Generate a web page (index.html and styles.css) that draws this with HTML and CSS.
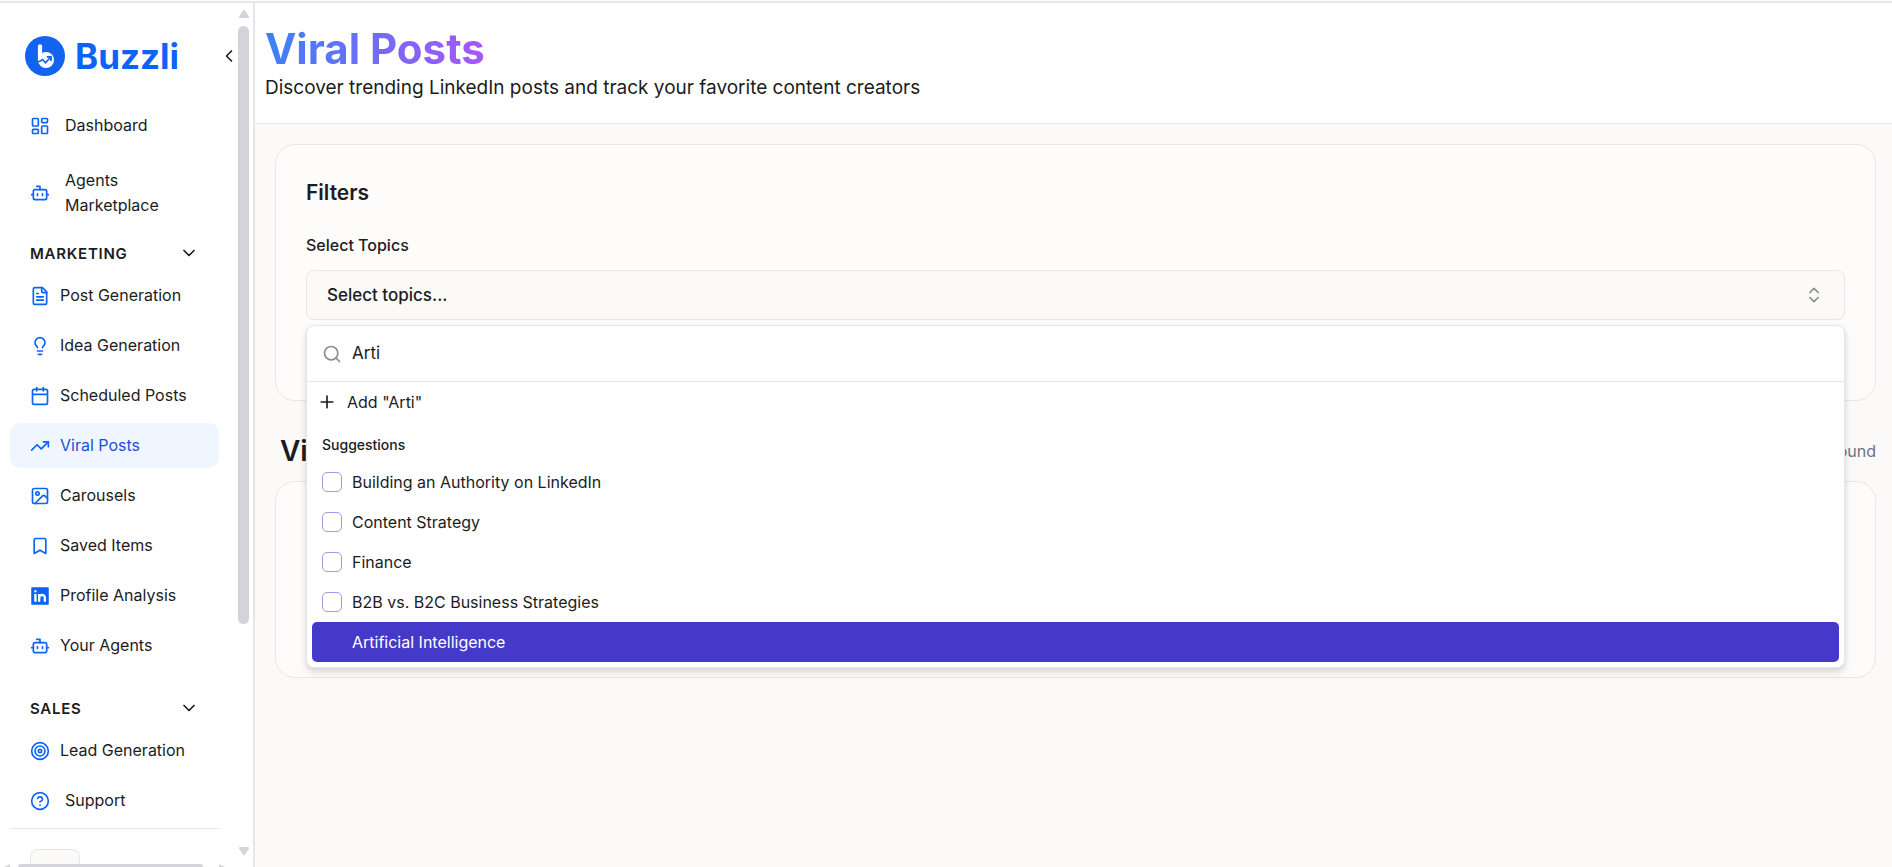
FILE: index.html
```html
<!DOCTYPE html>
<html lang="en">
<head>
<meta charset="utf-8">
<meta name="viewport" content="width=device-width, initial-scale=1">
<title>Buzzli - Viral Posts</title>
<link rel="stylesheet" href="styles.css">
</head>
<body>
<svg class="sprite" aria-hidden="true">
  <symbol id="bot" viewBox="0 0 24 24"><path d="M12 8V4H8"/><rect width="16" height="12" x="4" y="8" rx="2"/><path d="M2 14h2M20 14h2M15 13v2M9 13v2"/></symbol>
  <symbol id="down" viewBox="0 0 24 24"><path d="m6 9 6 6 6-6"/></symbol>
</svg>
<div class="app">
  <aside class="sidebar">
    <div class="sidebar-body">
      <div class="sidebar-content">
        <div class="brand">
          <svg class="brand-mark" viewBox="0 0 40 40" aria-hidden="true">
            <circle cx="20" cy="20" r="20" fill="#1463f0"/>
            <path d="M15 10.300V24" fill="none" stroke="#fff" stroke-width="4.200" stroke-linecap="round"/>
            <circle cx="21" cy="24" r="8" fill="#fff"/>
            <path d="M12 25.500l2.500 0 3-2 3 3.300 5-5.500M21.800 20.800h4.200v4.200" fill="none" stroke="#1463f0" stroke-width="1.700"/>
          </svg>
          <span class="brand-name">Buzzli</span>
          <button class="collapse" aria-label="Collapse sidebar"><svg class="icon" viewBox="0 0 24 24"><path d="m15 18-6-6 6-6"/></svg></button>
        </div>
        <nav class="nav">
          <a class="item wide" href="#"><svg class="icon" viewBox="0 0 24 24"><rect width="7" height="9" x="3" y="3" rx="1"/><rect width="7" height="5" x="14" y="3" rx="1"/><rect width="7" height="9" x="14" y="12" rx="1"/><rect width="7" height="5" x="3" y="16" rx="1"/></svg>Dashboard</a>
          <a class="item wide market" href="#"><svg class="icon"><use href="#bot"/></svg><span>Agents Marketplace</span></a>
          <button class="section">MARKETING<svg class="icon"><use href="#down"/></svg></button>
          <div class="group">
            <a class="item" href="#"><svg class="icon" viewBox="0 0 24 24"><path d="M15 2H6a2 2 0 0 0-2 2v16a2 2 0 0 0 2 2h12a2 2 0 0 0 2-2V7Z"/><path d="M14 2v4a2 2 0 0 0 2 2h4M10 9H8M16 13H8M16 17H8"/></svg>Post Generation</a>
            <a class="item" href="#"><svg class="icon" viewBox="0 0 24 24"><path d="M15 14c.2-1 .7-1.700 1.500-2.500 1-.9 1.500-2.200 1.500-3.500A6 6 0 0 0 6 8c0 1 .2 2.200 1.500 3.500.7.700 1.300 1.500 1.500 2.500M9 18h6M10 22h4"/></svg>Idea Generation</a>
            <a class="item" href="#"><svg class="icon" viewBox="0 0 24 24"><path d="M8 2v4M16 2v4"/><rect width="18" height="18" x="3" y="4" rx="2"/><path d="M3 10h18"/></svg>Scheduled Posts</a>
            <a class="item active" href="#" aria-current="page"><svg class="icon" viewBox="0 0 24 24"><path d="m22 7-8.500 8.500-5-5L2 17"/><path d="M16 7h6v6"/></svg>Viral Posts</a>
            <a class="item" href="#"><svg class="icon" viewBox="0 0 24 24"><rect width="18" height="18" x="3" y="3" rx="2"/><circle cx="9" cy="9" r="2"/><path d="m21 15-3.100-3.100a2 2 0 0 0-2.800 0L6 21"/></svg>Carousels</a>
            <a class="item" href="#"><svg class="icon" viewBox="0 0 24 24"><path d="m19 21-7-4-7 4V5a2 2 0 0 1 2-2h10a2 2 0 0 1 2 2v16z"/></svg>Saved Items</a>
            <a class="item" href="#"><svg class="icon" viewBox="0 0 24 24"><rect x="1.500" y="1.500" width="21" height="21" rx="1" fill="currentColor" stroke="none"/><path d="M6.500 9.500v9.500M6.500 5v2.500M11 9.500v9.500M11 14c0-4 6.800-4.500 6.800 0v5" stroke="#fff" stroke-width="2.800" stroke-linecap="butt"/></svg>Profile Analysis</a>
            <a class="item" href="#"><svg class="icon"><use href="#bot"/></svg>Your Agents</a>
          </div>
          <button class="section sales">SALES<svg class="icon"><use href="#down"/></svg></button>
          <div class="group">
            <a class="item" href="#"><svg class="icon" viewBox="0 0 24 24"><circle cx="12" cy="12" r="10"/><circle cx="12" cy="12" r="6"/><circle cx="12" cy="12" r="2"/></svg>Lead Generation</a>
            <a class="item wide" href="#"><svg class="icon" viewBox="0 0 24 24"><circle cx="12" cy="12" r="10"/><path d="M9.100 9a3 3 0 0 1 5.800 1c0 2-3 3-3 3M12 17h.01"/></svg>Support</a>
          </div>
        </nav>
        <div class="sidebar-foot"><button class="foot-button" aria-label="Account"></button></div>
      </div>
      <div class="vscroll" aria-hidden="true">
        <svg viewBox="0 0 12 10"><path d="M5 1.500q1-1.300 2 0l4 6q.6 1.500-1 1.500H2Q.4 9 1 7.500z"/></svg>
        <div class="vtrack"><div class="vthumb"></div></div>
        <svg viewBox="0 0 12 10"><path d="M5 8.500q1 1.300 2 0l4-6Q11.600 1 10 1H2Q.4 1 1 2.500z"/></svg>
      </div>
    </div>
    <div class="hscroll" aria-hidden="true">
      <svg viewBox="0 0 6 3"><path d="M0 3 6 0v3z"/></svg>
      <div class="hthumb"></div>
      <svg viewBox="0 0 6 3"><path d="M6 3 0 0v3z"/></svg>
    </div>
  </aside>
  <main class="main">
    <header class="page-head">
      <h1 class="title">Viral Posts</h1>
      <p class="subtitle">Discover trending LinkedIn posts and track your favorite content creators</p>
    </header>
    <div class="content">
      <section class="card filters">
        <h2 class="card-title">Filters</h2>
        <label class="field-label" for="topics">Select Topics</label>
        <div class="picker">
          <button class="picker-button" id="topics" aria-expanded="true">Select topics...<svg class="icon" viewBox="0 0 24 24"><path d="m7 15 5 5 5-5M7 9l5-5 5 5"/></svg></button>
          <div class="popover">
            <div class="search">
              <svg class="icon" viewBox="0 0 24 24"><circle cx="11" cy="11" r="8"/><path d="m21 21-4.300-4.300"/></svg>
              <input class="search-input" type="text" value="Arti" aria-label="Search topics">
            </div>
            <button class="add"><svg class="icon" viewBox="0 0 24 24"><path d="M5 12h14M12 5v14"/></svg>Add "Arti"</button>
            <div class="suggest-title">Suggestions</div>
            <div class="options">
              <label class="option"><input class="check" type="checkbox">Building an Authority on LinkedIn</label>
              <label class="option"><input class="check" type="checkbox">Content Strategy</label>
              <label class="option"><input class="check" type="checkbox">Finance</label>
              <label class="option"><input class="check" type="checkbox">B2B vs. B2C Business Strategies</label>
              <label class="option selected"><input class="check" type="checkbox">Artificial Intelligence</label>
            </div>
          </div>
        </div>
      </section>
      <div class="results-head">
        <h2 class="results-title">Viral Posts</h2>
        <span class="count">0 posts found</span>
      </div>
      <section class="card results"></section>
    </div>
  </main>
</div>
</body>
</html>
```
FILE: styles.css
```css
* { box-sizing: border-box; }
body { margin: 0; font-family: Inter, "Liberation Sans", sans-serif; font-size: 16px; line-height: 25px; color: #1c1c22; background: #fbfaf9; }
h1, h2, p { margin: 0; }
button, input { font: inherit; color: inherit; margin: 0; }
button { border: 0; background: none; padding: 0; text-align: left; cursor: pointer; }
.sprite { display: none; }
.icon { width: 20px; height: 20px; flex: none; fill: none; stroke: currentColor; stroke-width: 2; stroke-linecap: round; stroke-linejoin: round; }

.app { display: flex; height: 100vh; overflow: hidden; padding-top: 1px; background: #fff; }
.sidebar { width: 255px; flex: none; display: flex; flex-direction: column; background: #fff; border-top: 2px solid #e5e7eb; border-right: 2px solid #e5e7eb; }
.sidebar-body { flex: 1; min-height: 0; display: flex; }
.sidebar-content { flex: 1; overflow: hidden; }
.brand { display: flex; align-items: center; height: 100px; padding: 6px 0 0 25px; gap: 10px; }
.brand-mark { width: 40px; height: 40px; flex: none; }
.brand-name { font-size: 35px; line-height: 40px; font-weight: 700; color: #0d63f5; }
.collapse { margin-left: auto; margin-right: -5px; display: flex; }
.nav { display: flex; flex-direction: column; padding: 0 15px 0 10px; }
.item { display: flex; align-items: center; gap: 10px; min-height: 45px; padding: 10px 20px; border-radius: 10px; color: inherit; text-decoration: none; }
.item .icon { color: #0d63f5; }
.item.wide { gap: 15px; }
.item.active { background: #eff6ff; color: #1d4ed8; }
.market { margin: 10px 0 5px; }
.group { display: flex; flex-direction: column; gap: 5px; }
.section { display: flex; align-items: center; justify-content: space-between; height: 40px; padding: 0 20px; font-size: 15px; font-weight: 600; letter-spacing: 0.05em; }
.section.sales { margin-top: 20px; }
.sidebar-foot { margin: 5px 15px 0 10px; padding: 20px; border-top: 1px solid #e5e7eb; }
.foot-button { width: 50px; height: 50px; border: 1px solid #e5e7eb; border-radius: 8px; background: #fbfaf9; }
.vscroll { width: 19px; display: flex; flex-direction: column; align-items: center; padding: 6px 0 8px; gap: 7px; }
.vscroll svg { width: 12px; height: 10px; fill: #d3d3d9; }
.vtrack { flex: 1; }
.vthumb { width: 11px; height: calc(73% + 5px); border-radius: 6px; background: #d3d3d9; }
.hscroll { height: 3px; display: flex; align-items: flex-end; padding: 0 28px 0 4px; overflow: hidden; }
.hscroll svg { width: 6px; height: 3px; fill: #d3d3d9; }
.hthumb { flex: 1; height: 3px; margin: 0 16px 0 8px; border-radius: 5px 5px 0 0; background: #d3d3d9; }

.main { flex: 1; min-width: 0; background: #fbfaf9; border-top: 2px solid #e5e7eb; }
.page-head { padding: 20px 10px 21px; background: #fff; border-bottom: 1px solid #e5e7eb; }
.title { width: fit-content; font-size: 42px; line-height: 51px; font-weight: 700; color: transparent; background: linear-gradient(to right, #3b82f6, #a855f7); background-clip: text; -webkit-background-clip: text; }
.subtitle { font-size: 19px; line-height: 28px; }
.content { padding: 20px 16px 20px 20px; }
.card { border: 1px solid #e5e7eb; border-radius: 20px; background: #fdfcfb; }
.filters { min-height: 257px; padding: 30px; }
.card-title { font-size: 21px; line-height: 36px; font-weight: 600; }
.field-label { display: block; margin: 22px 0 12px; font-weight: 500; }
.picker { position: relative; }
.picker-button { display: flex; align-items: center; justify-content: space-between; width: 100%; height: 50px; padding: 0 20px; border: 1px solid #e5e7eb; border-radius: 8px; background: #fbfaf9; font-size: 17px; font-weight: 500; }
.picker-button .icon { color: #8e8e90; }
.popover { position: absolute; z-index: 1; top: 55px; left: 0; right: 0; border: 1px solid #e5e7eb; border-radius: 8px; background: #fff; box-shadow: 0 5px 8px rgba(0,0,0,.1), 0 2px 5px rgba(0,0,0,.08); }
.search { display: flex; align-items: center; gap: 10px; height: 56px; padding: 0 15px; border-bottom: 1px solid #e5e7eb; }
.search .icon { color: #8e8e8e; }
.search-input { flex: 1; min-width: 0; border: 0; outline: 0; padding: 0; background: none; font-size: 17px; }
.add { display: flex; align-items: center; gap: 10px; width: 100%; height: 40px; padding: 0 10px; }
.suggest-title { padding: 10px 15px 5px; font-size: 14px; font-weight: 500; line-height: 25px; }
.options { padding: 0 5px 5px; }
.option { display: flex; align-items: center; gap: 10px; height: 40px; padding: 0 10px; border-radius: 5px; }
.check { appearance: none; width: 20px; height: 20px; border: 1px solid #a29be4; border-radius: 5px; }
.selected { background: #4539c9; color: #fff; }
.selected .check { border-color: #4539c9; }
.results-head { display: flex; align-items: center; justify-content: space-between; height: 60px; margin-top: 20px; padding-left: 5px; }
.results-title { font-size: 28px; line-height: 35px; font-weight: 600; }
.count { color: #6b7280; }
.results { min-height: 197px; }
```
